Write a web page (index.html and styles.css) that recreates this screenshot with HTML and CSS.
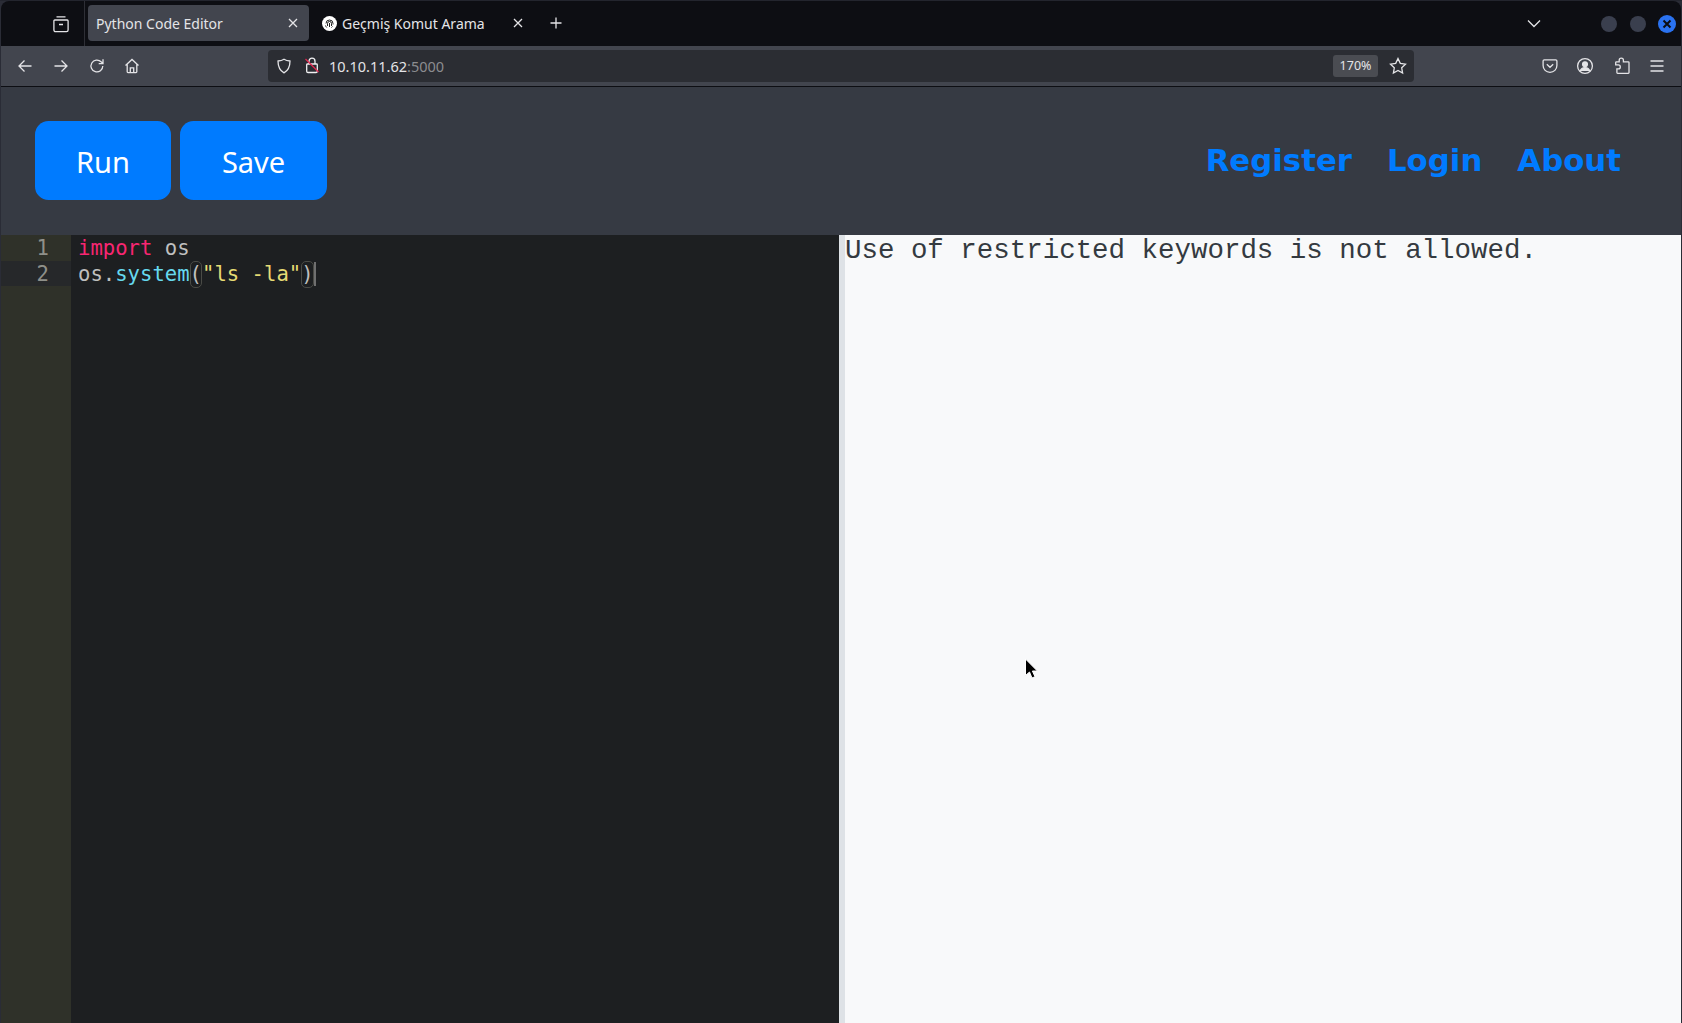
FILE: index.html
```html
<!DOCTYPE html>
<html lang="en">
<head>
<meta charset="utf-8">
<title>Python Code Editor</title>
<link rel="stylesheet" href="styles.css">
</head>
<body>
<div class="window">
  <div class="tabbar">
    <div class="tabs-btn">
      <svg class="ic" width="18" height="18" viewBox="0 0 18 18"><path d="M4.500 1.800h9M2.800 5h12.400a.9.9 0 0 1 .9.9v9.200a1.600 1.600 0 0 1-1.600 1.600H3.500a1.600 1.600 0 0 1-1.600-1.600V5.900a.9.900 0 0 1 .9-.9zM7 9.500h4"/></svg>
    </div>
    <div class="tab tab-active">
      <span class="tab-title">Python Code Editor</span>
      <svg class="ic tab-x" width="10" height="10" viewBox="0 0 10 10"><path d="M1 1l8 8M9 1l-8 8"/></svg>
    </div>
    <div class="tab tab-other">
      <svg class="favicon" width="15" height="15" viewBox="0 0 15 15"><circle cx="7.500" cy="7.500" r="7.500" fill="#fff"/><path d="M4 7.500a3.500 3.500 0 0 1 7 0v1M5.500 10V7.500a2 2 0 0 1 4 0v2.500M7.500 7v4M3.500 9.500c.3 1 .7 1.500 1.200 2M9.500 11.500l1-1" fill="none" stroke="#222" stroke-width="1"/></svg>
      <span class="tab-title">Geçmiş Komut Arama</span>
      <svg class="ic tab-x" width="10" height="10" viewBox="0 0 10 10"><path d="M1 1l8 8M9 1l-8 8"/></svg>
    </div>
    <svg class="ic newtab" width="14" height="14" viewBox="0 0 14 14"><path d="M7 1.500v11M1.500 7h11"/></svg>
    <div class="tabbar-right">
      <svg class="ic chevron" width="14" height="9" viewBox="0 0 14 9"><path d="M1 1.500l6 6 6-6"/></svg>
      <div class="win-btns">
        <span class="win-btn"></span>
        <span class="win-btn"></span>
        <span class="win-btn win-close"><svg width="10" height="10" viewBox="0 0 10 10"><path d="M1.500 1.500l7 7M8.500 1.500l-7 7" stroke="#0c0d12" stroke-width="2" fill="none"/></svg></span>
      </div>
    </div>
  </div>

  <div class="toolbar">
    <div class="nav-btns">
      <svg class="ic" width="16" height="16" viewBox="0 0 16 16"><path d="M14.500 8H2M7.500 2.500L2 8l5.500 5.500"/></svg>
      <svg class="ic" width="16" height="16" viewBox="0 0 16 16"><path d="M1.500 8H14M8.500 2.500L14 8l-5.500 5.500"/></svg>
      <svg class="ic" width="16" height="16" viewBox="0 0 16 16"><path d="M13.800 8a5.900 5.900 0 1 1-1.700-4.200L14 5.600M14 1.200v4.400H9.700"/></svg>
      <svg class="ic home" width="16" height="16" viewBox="0 0 16 16"><path d="M1.500 7.500L8 1.500l6.500 6M3.200 6.500v7.300a.8.800 0 0 0 .8.800h8a.8.800 0 0 0 .8-.8V6.500M6.300 14.500V9.800h3.400v4.700"/></svg>
    </div>
    <div class="urlbar">
      <svg class="ic shield" width="16" height="16" viewBox="0 0 16 16"><path d="M8 1.200c2 1.300 3.800 1.700 6 1.800 0 5.500-1.800 9.600-6 11.800C3.800 12.600 2 8.500 2 3c2.200-.1 4-.5 6-1.800z"/></svg>
      <svg class="lock" width="16" height="18" viewBox="0 0 16 18"><path d="M5 8V5.200a3 3 0 0 1 6 0V8M3.500 8h9a.8.800 0 0 1 .8.800v6.400a1.300 1.300 0 0 1-1.300 1.300H4a1.300 1.300 0 0 1-1.300-1.300V8.800A.8.800 0 0 1 3.500 8z" fill="none" stroke="#f0f0f2" stroke-width="1.300"/><path d="M1.500 3l13 13" stroke="#e22850" stroke-width="1.300"/></svg>
      <span class="url"><span class="url-host">10.10.11.62</span><span class="url-port">:5000</span></span>
      <span class="zoom-badge">170%</span>
      <svg class="ic" width="18" height="18" viewBox="0 0 18 18"><path d="M9 1.500l2.300 4.900 5.200.7-3.800 3.700.9 5.300L9 13.500l-4.600 2.600.9-5.300-3.800-3.700 5.200-.7z"/></svg>
    </div>
    <div class="tool-btns">
      <svg class="ic" width="16" height="16" viewBox="0 0 16 16"><path d="M2.300 1.800h11.400a1.200 1.200 0 0 1 1.200 1.200v4.400c0 4-3 6.900-6.900 6.900S1.100 11.400 1.100 7.400V3a1.200 1.200 0 0 1 1.200-1.200zM4.800 6.300L8 9.300l3.200-3"/></svg>
      <svg class="ic" width="18" height="18" viewBox="0 0 18 18"><circle cx="9" cy="9" r="7.400"/><circle cx="9" cy="7.200" r="2.400" fill="#e4e4e7"/><path d="M4.300 14c.6-2.300 2.300-3.300 4.700-3.300s4.100 1 4.700 3.300" fill="#e4e4e7"/></svg>
      <svg class="ic" width="18" height="18" viewBox="0 0 18 18"><path d="M8.300 1.200a2.100 2.100 0 0 1 2.100 2.100v1.500h4.900a.7.700 0 0 1 .7.700v10.100a.7.700 0 0 1-.7.700H4.600a.7.700 0 0 1-.7-.7v-3.700h1.400a2 2 0 0 0 0-4H2.700V5.500a.7.700 0 0 1 .7-.7h2.800V3.300a2.100 2.100 0 0 1 2.100-2.100z"/></svg>
      <svg class="ic" width="16" height="16" viewBox="0 0 16 16"><path d="M1.500 3h13M1.500 8h13M1.500 13h13"/></svg>
    </div>
  </div>

  <div class="page">
    <header class="app-header">
      <div class="actions">
        <button class="btn">Run</button>
        <button class="btn">Save</button>
      </div>
      <nav class="links">
        <a class="link">Register</a>
        <a class="link">Login</a>
        <a class="link">About</a>
      </nav>
    </header>
    <main class="workspace">
      <section class="editor">
        <div class="gutter">
          <div class="gutter-line">1</div>
          <div class="gutter-line gutter-active">2</div>
        </div>
        <div class="code">
          <div class="code-line"><span class="kw">import</span> os</div>
          <div class="code-line">os.<span class="fn">system</span><span class="paren">(</span><span class="str">"ls -la"</span><span class="paren">)</span><span class="caret"></span></div>
        </div>
      </section>
      <section class="output">Use of restricted keywords is not allowed.</section>
    </main>
  </div>

  <svg class="pointer" width="14" height="22" viewBox="0 0 14 22"><path d="M1.500 1v16.500l4-3.500 2.500 6 3-1.300-2.600-5.700h5z" fill="#000" stroke="#fff" stroke-width="1"/></svg>
</div>
</body>
</html>
```

FILE: styles.css
```css
* { box-sizing: border-box; }
html, body { margin: 0; height: 100%; overflow: hidden; }
body { background: #2a2c36; font-family: "Noto Sans", sans-serif; }

.window {
  position: relative;
  width: 1682px;
  height: 1023px;
  display: flex;
  flex-direction: column;
  padding: 0 1px;
  border-top: 1px solid #23252e;
}

.ic { fill: none; stroke: #e4e4e7; stroke-width: 1.3; flex: none; }

.tabbar {
  height: 45px;
  background: #0d0e13;
  display: flex;
  align-items: center;
  color: #e4e4e7;
  font-size: 14px;
  border-radius: 8px 8px 0 0;
}
.tabs-btn {
  width: 84px;
  height: 45px;
  padding-left: 51px;
  border-right: 1px solid #2e2f36;
  display: flex;
  align-items: center;
}
.tab {
  height: 36px;
  border-radius: 4px;
  display: flex;
  align-items: center;
  position: relative;
  margin-top: -1px;
}
.tab-active {
  width: 221px;
  margin-left: 3px;
  padding: 0 11px 0 8px;
  background: #42454e;
  justify-content: space-between;
}
.tab-other {
  width: 221px;
  padding-left: 13px;
  gap: 5px;
}
.tab-other .tab-x { position: absolute; right: 7px; }
.tab-title { white-space: nowrap; }
.favicon { flex: none; }
.newtab { margin: -1px 0 0 19px; }
.tabbar-right {
  margin-left: auto;
  display: flex;
  align-items: center;
}
.chevron { margin-right: 60px; }
.win-btns { display: flex; align-items: center; gap: 13px; margin-right: 5px; }
.win-btn { width: 16px; height: 16px; border-radius: 50%; background: #3a3f4e; display: flex; align-items: center; justify-content: center; }
.win-close { width: 18px; height: 18px; background: #2a72f0; margin-left: -1px; }

.toolbar {
  height: 41px;
  background: #42454e;
  border-bottom: 1px solid #0d0e13;
  display: flex;
  align-items: center;
}
.nav-btns {
  width: 267px;
  padding-left: 16px;
  display: flex;
  align-items: center;
  gap: 20px;
}
.home { margin-left: -1px; }
.urlbar {
  width: 1146px;
  height: 32px;
  background: #2b2d33;
  border-radius: 4px;
  display: flex;
  align-items: center;
  padding: 0 7px 0 61px;
  position: relative;
  margin-top: -1px;
  color: #e4e4e7;
}
.shield { position: absolute; left: 8px; top: 8px; }
.lock { position: absolute; left: 36px; top: 6px; }
.url { font-size: 14.5px; flex: 1; }
.url-port { color: #8b8c90; }
.zoom-badge {
  width: 45px;
  height: 22px;
  border-radius: 3px;
  background: #4a4c52;
  font-size: 12.5px;
  display: flex;
  align-items: center;
  justify-content: center;
  margin-right: 11px;
}
.tool-btns {
  flex: 1;
  display: flex;
  align-items: center;
  justify-content: flex-end;
  gap: 18.5px;
  padding-right: 16px;
}

.page { flex: 1; display: flex; flex-direction: column; min-height: 0; background: #1d1f21; }

.app-header {
  height: 148px;
  background: #363a43;
  display: flex;
  align-items: center;
  justify-content: space-between;
  padding: 0 60px 0 34px;
}
.actions { display: flex; gap: 9px; margin-top: -2px; }
.btn {
  height: 79px;
  padding: 2px 41px 0;
  border: 0;
  border-radius: 13.6px;
  background: #007bff;
  color: #fff;
  font-family: "Noto Sans", sans-serif;
  font-size: 29px;
}
.btn + .btn { padding: 2px 42px 0; }
.links { display: flex; gap: 35px; margin-top: -2px; }
.link {
  color: #007bff;
  font-family: "DejaVu Sans", sans-serif;
  font-weight: 700;
  font-size: 30.8px;
}

.workspace { flex: 1; display: flex; min-height: 0; }

.editor { width: 838px; display: flex; background: #1d1f21; }
.gutter { width: 70px; background: #2f3129; color: #8f908a; font-family: "DejaVu Sans Mono", monospace; font-size: 20.6px; }
.gutter-line { height: 26px; line-height: 26px; text-align: right; padding-right: 22px; }
.gutter-active { height: 25px; background: #26282a; }
.code { flex: 1; padding-left: 7px; color: #bfbfbf; font-family: "DejaVu Sans Mono", monospace; font-size: 20.6px; }
.code-line { height: 26px; line-height: 26px; white-space: pre; }
.kw { color: #f92672; }
.fn { color: #66d9ef; }
.str { color: #e6db74; }
.paren { display: inline-block; height: 27px; outline: 1px solid #4a4b46; outline-offset: -1px; border-radius: 5px; vertical-align: top; }
.caret { display: inline-block; width: 2px; height: 24px; background: #6f6f6f; vertical-align: top; margin-top: 1px; }

.output {
  flex: 1;
  background: #f8f9fa;
  border-left: 6px solid #dee2e6;
  color: #343a40;
  font-family: "Liberation Mono", monospace;
  font-size: 27.46px;
  line-height: 32px;
  white-space: pre;
}

.pointer { position: absolute; left: 1024px; top: 657px; }
```
